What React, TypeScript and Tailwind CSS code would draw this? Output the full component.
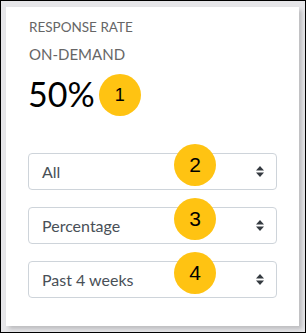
import React from "react";

function Badge({ n, className = "" }: { n: number; className?: string }) {
  return (
    <div
      className={`flex h-[42px] w-[42px] items-center justify-center rounded-full bg-[#ffc312] text-black ${className}`}
      style={{ fontFamily: "Arial, 'Liberation Sans', sans-serif" }}
    >
      {n}
    </div>
  );
}

function SelectBox({ label, badge }: { label: string; badge: number }) {
  return (
    <div className="relative flex h-[37px] w-[249px] items-center justify-between rounded-[4px] border border-[#ced4da] bg-white pl-[13px] pr-[12px]">
      <span className="text-[16px] text-[#495057]">{label}</span>
      <svg width="8" height="11" viewBox="0 0 8 11" className="text-[#343a40]">
        <path d="M4 0 L8 4.5 H0 Z" fill="currentColor" />
        <path d="M4 11 L8 6.5 H0 Z" fill="currentColor" />
      </svg>
      <Badge n={badge} className="absolute left-[145px] top-[-10px] text-[21px]" />
    </div>
  );
}

export default function App() {
  return (
    <div
      className="h-[333px] w-[306px] border border-black bg-[#e6e6e9] pb-[6px] pl-[5px] pr-[6px] pt-[6px]"
      style={{ fontFamily: "Lato, 'Noto Sans', sans-serif" }}
    >
      <div className="flex h-full w-full flex-col bg-white px-[22px] pt-[12px] shadow-[3px_3px_4px_rgba(0,0,0,0.18)]">
        <div className="ml-[1px] text-[13.5px] leading-[16px] text-[#666]">RESPONSE RATE</div>
        <div className="ml-[1px] mt-[10px] text-[15px] leading-[18px] text-[#666]">ON-DEMAND</div>
        <div className="mt-[9px] flex items-center">
          <span className="text-[34px] leading-[40px] text-black">50%</span>
          <Badge n={1} className="ml-[4px] mt-[2px] text-[18px]" />
        </div>
        <div className="mt-[37px] flex flex-col gap-[17px]">
          <SelectBox label="All" badge={2} />
          <SelectBox label="Percentage" badge={3} />
          <SelectBox label="Past 4 weeks" badge={4} />
        </div>
      </div>
    </div>
  );
}
